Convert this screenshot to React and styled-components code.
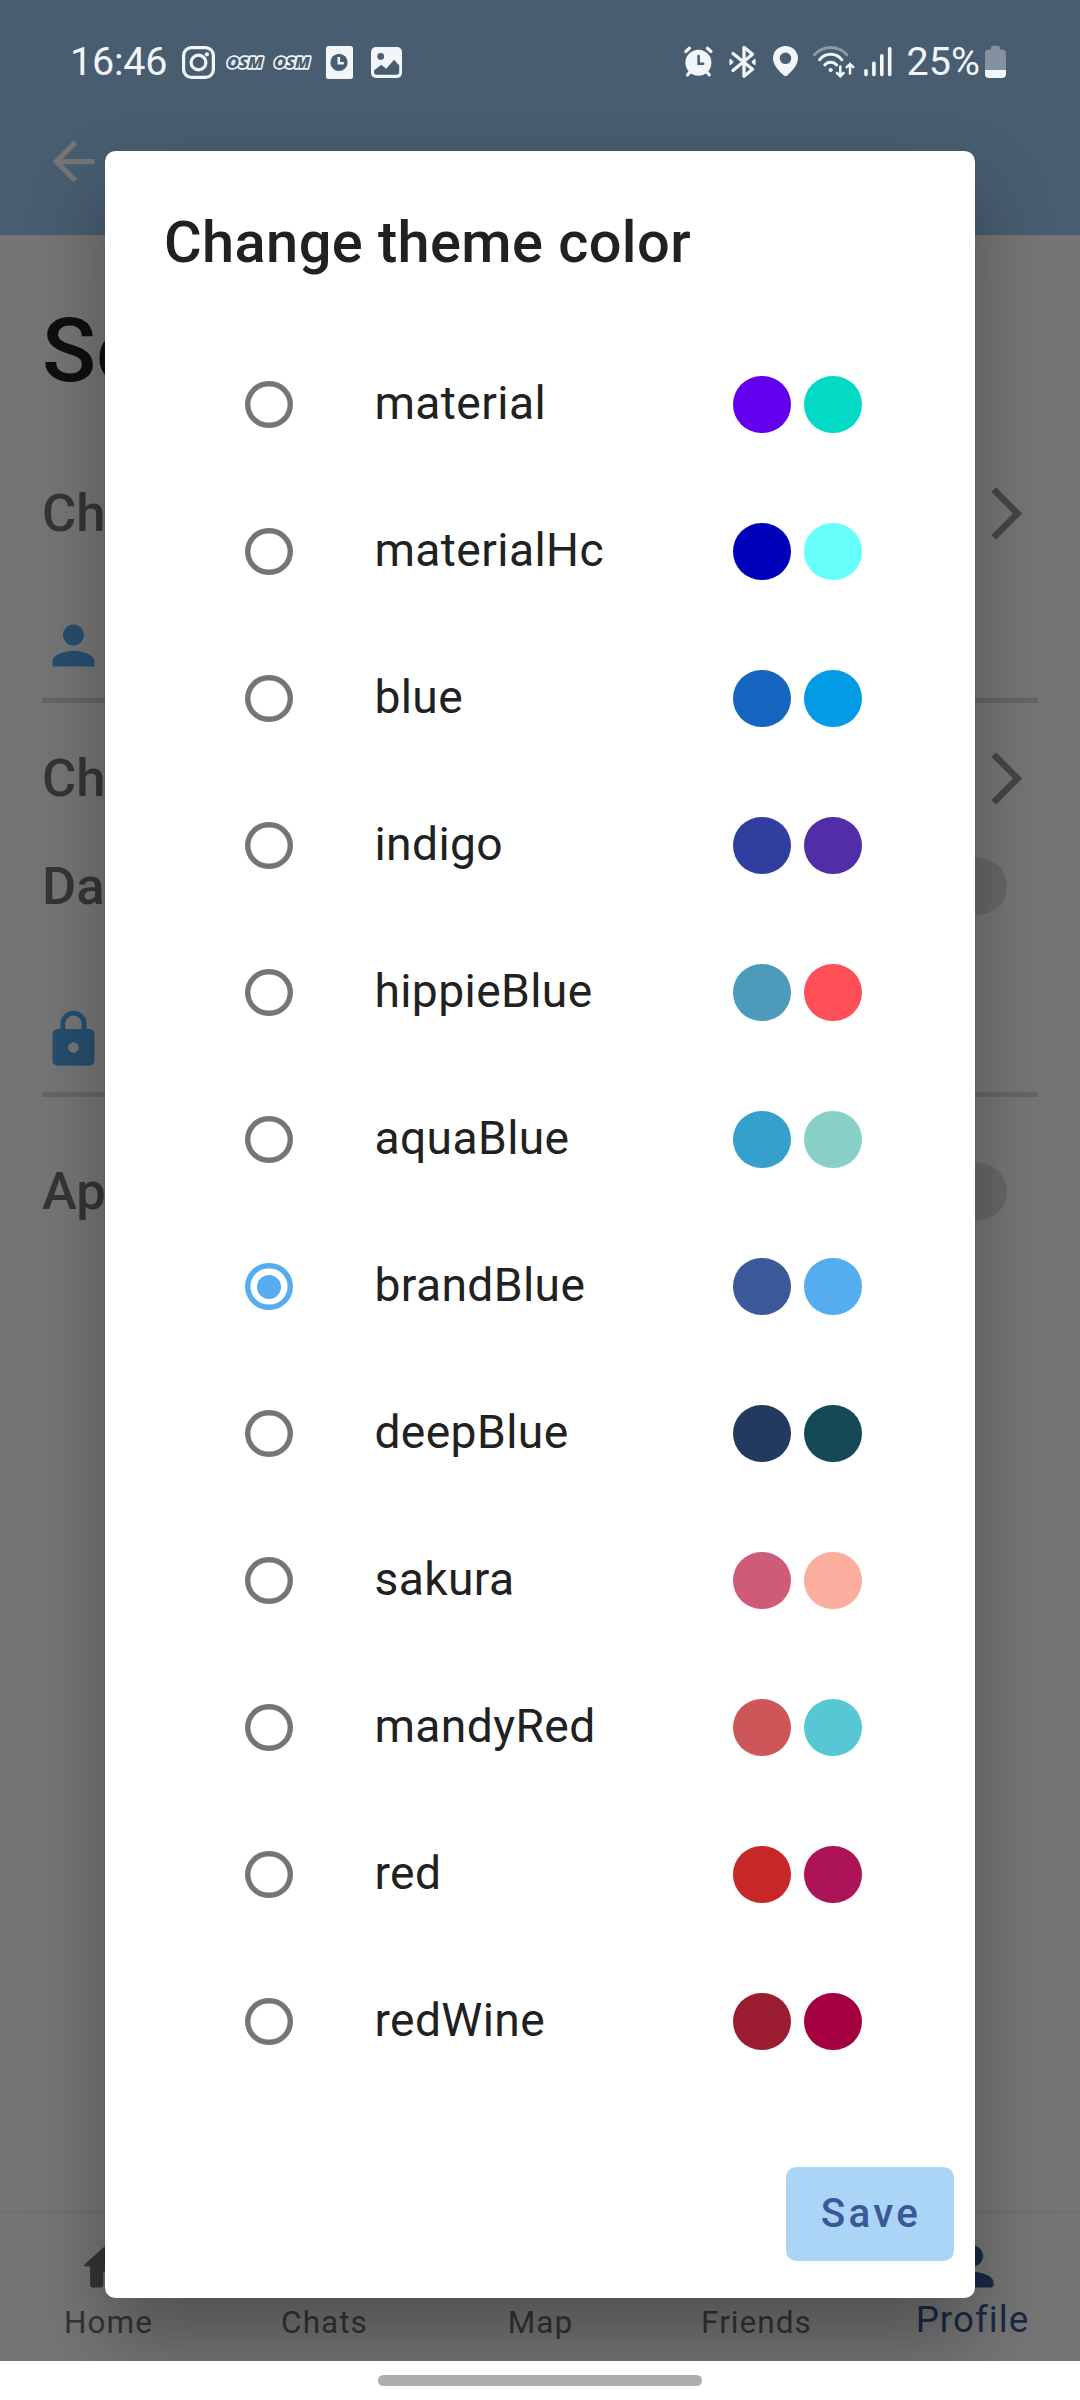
import React, { useState } from "react";
import styled, { createGlobalStyle } from "styled-components";

const GlobalStyle = createGlobalStyle`
  * { box-sizing: border-box; }
  body { margin: 0; background: #ffffff; font-family: Roboto, "Noto Sans", sans-serif; }
  svg { display: block; flex: none; }
`;

const Phone = styled.div`
  position: relative;
  display: flex;
  flex-direction: column;
  width: 1080px;
  height: 2400px;
  overflow: hidden;
  background: #ffffff;
`;

const Screen = styled.div`
  position: relative;
  display: flex;
  flex-direction: column;
  height: 2361px;
  overflow: hidden;
`;

/* ---------- status bar ---------- */

const StatusBar = styled.div`
  position: absolute;
  top: 0;
  left: 0;
  z-index: 3;
  display: flex;
  justify-content: space-between;
  width: 100%;
  height: 124px;
  padding: 0 74px 0 70px;
  color: #f2f5f9;
`;

const StatusGroup = styled.div`
  display: flex;
  align-items: center;
`;

const StatusText = styled.span`
  width: ${(p) => p.$width}px;
  padding-left: ${(p) => p.$inset || 0}px;
  font-size: 39.5px;
  line-height: 46px;
  letter-spacing: ${(p) => p.$spacing || 0}px;
  white-space: nowrap;
`;

const Glyph = styled.svg`
  width: ${(p) => p.$width}px;
  height: 34px;
  margin-left: ${(p) => p.$gap || 0}px;
  overflow: visible;
`;

const OsmText = styled.text`
  font-family: "Open Sans", sans-serif;
  font-size: 16.5px;
  font-weight: 800;
  font-style: italic;
  fill: #485d70;
  stroke: #eef2f6;
  stroke-width: 3.4px;
  stroke-linejoin: round;
  paint-order: stroke;
`;

/* ---------- page behind the dialog ---------- */

const AppBar = styled.header`
  display: flex;
  align-items: flex-end;
  height: 235px;
  padding: 0 42px 42px;
  background: #9dcbf4;
  color: #ffffff;
`;

const Content = styled.main`
  flex: 1;
  display: flex;
  flex-direction: column;
  padding: 64px 42px 0;
  background: #ffffff;
`;

const PageTitle = styled.h1`
  margin: 0 0 74.5px;
  font-size: 89.25px;
  font-weight: 500;
  line-height: 104px;
  color: #212121;
`;

const SettingRow = styled.div`
  display: flex;
  align-items: center;
  justify-content: space-between;
  height: 72px;
  margin-top: ${(p) => p.$gap || 0}px;
  padding-right: ${(p) => p.$inset || 0}px;
  color: #757575;
`;

const SettingLabel = styled.span`
  padding-bottom: 2px;
  font-size: 52.5px;
  font-weight: 500;
  line-height: 62px;
`;

const SectionHead = styled.div`
  height: 89.5px;
  margin-top: ${(p) => p.$gap}px;
  border-bottom: 5px solid #dcdcdc;
  color: #56abee;
`;

const Toggle = styled.span`
  width: 96px;
  height: 57px;
  border-radius: 29px;
  background: #e0e0e0;
`;

const Chevron = styled.span`
  color: #9a9a9a;
`;

const BottomNav = styled.nav`
  display: grid;
  grid-template-columns: repeat(5, 216px);
  height: 147px;
  background: #ffffff;
  box-shadow: 0 -1px 7px rgba(0, 0, 0, 0.07);
`;

const NavItem = styled.div`
  display: flex;
  flex-direction: column;
  align-items: center;
  padding: 21px 0 0 1px;
  color: ${(p) => (p.$active ? "#3b5998" : "#717171")};
`;

const NavIconSlot = styled.span`
  height: 64px;
`;

const NavLabel = styled.span`
  font-size: ${(p) => (p.$active ? 36.75 : 31.5)}px;
  line-height: ${(p) => (p.$active ? 42 : 48)}px;
  letter-spacing: 1.05px;
`;

const GestureArea = styled.div`
  display: flex;
  align-items: center;
  justify-content: center;
  height: 39px;
`;

const GesturePill = styled.span`
  width: 324px;
  height: 11px;
  border-radius: 5.5px;
  background: #aeaeae;
`;

/* ---------- dialog ---------- */

const Scrim = styled.div`
  position: absolute;
  inset: 0;
  z-index: 2;
  display: flex;
  padding: 151px 105px 63px;
  background: rgba(0, 0, 0, 0.54);
`;

const Dialog = styled.section`
  flex: 1;
  display: flex;
  flex-direction: column;
  border-radius: 10.5px;
  background: #ffffff;
  box-shadow: 0 42px 76px rgba(0, 0, 0, 0.3);
`;

const DialogTitle = styled.h2`
  height: 180px;
  margin: 0;
  padding: 57px 0 0 59px;
  font-size: 57.75px;
  font-weight: 500;
  line-height: 68px;
  letter-spacing: 0.4px;
  color: #212121;
`;

const OptionList = styled.div`
  display: flex;
  flex-direction: column;
`;

const OptionRow = styled.div`
  display: grid;
  grid-template-columns: 129px 358.6px auto;
  align-items: center;
  height: 147px;
  padding-left: 140.4px;
`;

const RadioRing = styled.span`
  display: flex;
  align-items: center;
  justify-content: center;
  width: 47.25px;
  height: 47.25px;
  border-radius: 50%;
  box-shadow: inset 0 0 0 5.4px ${(p) => (p.$checked ? "#55acee" : "#757575")};
`;

const RadioDot = styled.span`
  width: 24px;
  height: 24px;
  border-radius: 50%;
  background: #55acee;
`;

const OptionLabel = styled.span`
  padding-bottom: 3px;
  font-size: 46.2px;
  line-height: 54px;
  letter-spacing: 0.4px;
  color: #212121;
`;

const Swatches = styled.span`
  display: flex;
  gap: 13.1px;
`;

const Swatch = styled.span`
  width: 57.75px;
  height: 57.75px;
  border-radius: 50%;
  background: ${(p) => p.$color};
`;

const Actions = styled.div`
  display: flex;
  justify-content: flex-end;
  padding: 71.5px 21px 0;
`;

const SaveButton = styled.button`
  width: 168px;
  height: 94.5px;
  padding: 0 0 0 2px;
  border: 0;
  border-radius: 10.5px;
  background: #aad5f7;
  font-family: inherit;
  font-size: 40.4px;
  font-weight: 500;
  letter-spacing: 3.3px;
  color: #3b5998;
`;

const MaterialIcon = ({ d }) => (
  <svg width="63" height="63" viewBox="0 0 24 24" fill="currentColor">
    <path d={d} />
  </svg>
);

const icons = {
  back: "M20 11H7.83l5.59-5.59L12 4l-8 8 8 8 1.41-1.41L7.83 13H20v-2z",
  forward: "M6.23 20.23 8 22l10-10L8 2 6.23 3.77 14.46 12z",
  person:
    "M12 12c2.21 0 4-1.79 4-4s-1.79-4-4-4-4 1.79-4 4 1.79 4 4 4zm0 2c-2.67 0-8 1.34-8 4v2h16v-2c0-2.66-5.33-4-8-4z",
  personRounded:
    "M12 12c2.21 0 4-1.79 4-4s-1.79-4-4-4-4 1.79-4 4 1.79 4 4 4zm0 2c-2.67 0-8 1.34-8 4v1c0 .55.45 1 1 1h14c.55 0 1-.45 1-1v-1c0-2.66-5.33-4-8-4z",
  lock: "M18 8h-1V6c0-2.76-2.24-5-5-5S7 3.24 7 6v2H6c-1.1 0-2 .9-2 2v10c0 1.1.9 2 2 2h12c1.1 0 2-.9 2-2V10c0-1.1-.9-2-2-2zm-6 9c-1.1 0-2-.9-2-2s.9-2 2-2 2 .9 2 2-.9 2-2 2zm3.1-9H8.9V6c0-1.71 1.39-3.1 3.1-3.1 1.71 0 3.1 1.39 3.1 3.1v2z",
  home: "M10 19v-5h4v5c0 .55.45 1 1 1h3c.55 0 1-.45 1-1v-7h1.7c.46 0 .68-.57.33-.87L12.67 3.6c-.38-.34-.96-.34-1.34 0l-8.36 7.53c-.34.3-.13.87.33.87H5v7c0 .55.45 1 1 1h3c.55 0 1-.45 1-1z",
};

const Osm = ({ gap }) => (
  <Glyph $width={39} $gap={gap} viewBox="0 0 39 34">
    <OsmText x="1" y="23" textLength="36" lengthAdjust="spacingAndGlyphs">
      OSM
    </OsmText>
  </Glyph>
);

const StatusIconsLeft = () => (
  <>
    <Glyph $width={33} viewBox="0 0 33 34" fill="none" stroke="currentColor" strokeWidth="3.2">
      <rect x="1.6" y="2.6" width="29.8" height="29.8" rx="8" />
      <circle cx="16.5" cy="17.5" r="7.4" />
      <circle cx="24.9" cy="9.3" r="2.1" fill="currentColor" stroke="none" />
    </Glyph>
    <Osm gap={11} />
    <Osm gap={8} />
    <Glyph $width={27} $gap={14} viewBox="0 0 27 34">
      <rect y="1" width="27" height="33" rx="2.5" fill="currentColor" />
      <circle cx="13" cy="17.4" r="8.6" fill="#485d70" />
      <path d="M12.8 12v6.2h5" fill="none" stroke="currentColor" strokeWidth="2.6" />
    </Glyph>
    <Glyph $width={31} $gap={18} viewBox="0 0 31 34">
      <rect y="2" width="31" height="31" rx="5" fill="currentColor" />
      <g fill="#485d70">
        <circle cx="9.7" cy="11.4" r="3.4" />
        <path d="M3 25.5 10.2 19.8 15.2 23.8 23 14.8 28.2 20.5V27q0 2.8-2.8 2.8H5.8Q3 29.8 3 27Z" />
      </g>
    </Glyph>
  </>
);

const StatusIconsRight = () => (
  <>
    <Glyph $width={29} viewBox="0 0 29 34" strokeLinecap="round" fill="none">
      <circle cx="14.4" cy="17.7" r="13" fill="currentColor" />
      <path
        d="M1.8 6.5 5.5 3.3M27 6.5 23.3 3.3M3.5 29.8 6.5 26.5M25.3 29.8 22.3 26.5"
        stroke="currentColor"
        strokeWidth="3.2"
      />
      <path d="M14.6 11v7.8h4.6" stroke="#485d70" strokeWidth="2.5" />
    </Glyph>
    <Glyph
      $width={27}
      $gap={16}
      viewBox="0 0 27 34"
      fill="none"
      stroke="currentColor"
      strokeWidth="3.3"
      strokeLinecap="round"
      strokeLinejoin="round"
    >
      <path d="M4 8.5 23.5 24.3 15 31.2V2.3L23.5 9.2 4 25.5" />
      <path d="M1.3 14.8v4.4L3.5 17ZM25.7 14.8v4.4L23.5 17Z" strokeWidth="1.8" fill="currentColor" />
    </Glyph>
    <Glyph $width={25} $gap={17} viewBox="0 0 25 34" fill="currentColor">
      <path
        fillRule="evenodd"
        d="M12.5 1C5.6 1 0 6.4 0 13.2 0 19.5 5 25 10.5 30.2q2 1.7 4 0C20 25 25 19.5 25 13.2 25 6.4 19.4 1 12.5 1Zm0 6.5a5.8 5.8 0 1 1 0 11.6 5.8 5.8 0 0 1 0-11.6Z"
      />
    </Glyph>
    <Glyph
      $width={42}
      $gap={15}
      viewBox="0 0 42 34"
      fill="none"
      stroke="currentColor"
      strokeWidth="2.9"
      strokeLinecap="round"
    >
      <path d="M1.5 9.8A21.7 21.7 0 0 1 33.9 9.8" opacity=".4" />
      <path d="M6.5 14.8A14.1 14.1 0 0 1 28.9 14.8" />
      <path d="M11.7 20A7.8 7.8 0 0 1 23.7 20" />
      <circle cx="17.7" cy="25" r="2.1" fill="currentColor" stroke="none" />
      <path
        d="M27.3 21.5V31M24 28l3.3 3.3L30.6 28M37 28.5V19M33.7 22.2 37 18.9l3.3 3.3"
        strokeWidth="2.5"
      />
    </Glyph>
    <Glyph $width={28} $gap={9} viewBox="0 0 28 34" fill="currentColor">
      <rect x="0.2" y="24" width="3.6" height="7.2" rx="1.6" />
      <rect x="8.1" y="16.5" width="3.6" height="14.7" rx="1.6" />
      <rect x="16" y="9" width="3.6" height="22.2" rx="1.6" />
      <rect x="23.9" y="2" width="3.6" height="29.2" rx="1.6" />
    </Glyph>
    <StatusText $width={93} $inset={14.5}>
      25%
    </StatusText>
    <Glyph $width={21} viewBox="0 0 21 34">
      <path d="M6 3.2Q6 .8 8.4 .8h4.2Q15 .8 15 3.2V4.500h2q4 0 4 4V25H0V8.500q0-4 4-4h2Z" fill="#84929f" />
      <path d="M0 25h21v4q0 4-4 4H4q-4 0-4-4Z" fill="currentColor" />
    </Glyph>
  </>
);

const themes = [
  ["material", "#6200ee", "#03dac6"],
  ["materialHc", "#0000ba", "#66fff9"],
  ["blue", "#1565c0", "#039be5"],
  ["indigo", "#303f9f", "#512da8"],
  ["hippieBlue", "#4c9bba", "#ff4f58"],
  ["aquaBlue", "#35a0cb", "#89d1c8"],
  ["brandBlue", "#3b5998", "#55acee"],
  ["deepBlue", "#223a5e", "#144955"],
  ["sakura", "#ce5b78", "#fbae9d"],
  ["mandyRed", "#cd5758", "#57c8d3"],
  ["red", "#c62828", "#ad1457"],
  ["redWine", "#9b1b30", "#a4003f"],
];

const navItems = [
  { label: "Home", icon: icons.home },
  { label: "Chats" },
  { label: "Map" },
  { label: "Friends" },
  { label: "Profile", icon: icons.personRounded, active: true },
];

export default function App() {
  const [selected, setSelected] = useState("brandBlue");

  return (
    <>
      <GlobalStyle />
      <Phone>
        <StatusBar>
          <StatusGroup>
            <StatusText $width={112} $spacing={-0.2}>
              16:46
            </StatusText>
            <StatusIconsLeft />
          </StatusGroup>
          <StatusGroup>
            <StatusIconsRight />
          </StatusGroup>
        </StatusBar>

        <Screen>
          <AppBar>
            <MaterialIcon d={icons.back} />
          </AppBar>
          <Content>
            <PageTitle>Se</PageTitle>
            <SettingRow>
              <SettingLabel>Ch</SettingLabel>
              <Chevron>
                <MaterialIcon d={icons.forward} />
              </Chevron>
            </SettingRow>
            <SectionHead $gap={64}>
              <MaterialIcon d={icons.person} />
            </SectionHead>
            <SettingRow $gap={39.5}>
              <SettingLabel>Ch</SettingLabel>
              <Chevron>
                <MaterialIcon d={icons.forward} />
              </Chevron>
            </SettingRow>
            <SettingRow $gap={36} $inset={31}>
              <SettingLabel>Da</SettingLabel>
              <Toggle />
            </SettingRow>
            <SectionHead $gap={85}>
              <MaterialIcon d={icons.lock} />
            </SectionHead>
            <SettingRow $gap={58.5} $inset={31}>
              <SettingLabel>Ap</SettingLabel>
              <Toggle />
            </SettingRow>
          </Content>
          <BottomNav>
            {navItems.map(({ label, icon, active }) => (
              <NavItem key={label} $active={active}>
                <NavIconSlot>{icon && <MaterialIcon d={icon} />}</NavIconSlot>
                <NavLabel $active={active}>{label}</NavLabel>
              </NavItem>
            ))}
          </BottomNav>

          <Scrim>
            <Dialog role="dialog">
              <DialogTitle>Change theme color</DialogTitle>
              <OptionList role="radiogroup">
                {themes.map(([name, primary, secondary]) => (
                  <OptionRow
                    key={name}
                    role="radio"
                    aria-checked={selected === name}
                    onClick={() => setSelected(name)}
                  >
                    <RadioRing $checked={selected === name}>{selected === name && <RadioDot />}</RadioRing>
                    <OptionLabel>{name}</OptionLabel>
                    <Swatches>
                      <Swatch $color={primary} />
                      <Swatch $color={secondary} />
                    </Swatches>
                  </OptionRow>
                ))}
              </OptionList>
              <Actions>
                <SaveButton>Save</SaveButton>
              </Actions>
            </Dialog>
          </Scrim>
        </Screen>

        <GestureArea>
          <GesturePill />
        </GestureArea>
      </Phone>
    </>
  );
}
